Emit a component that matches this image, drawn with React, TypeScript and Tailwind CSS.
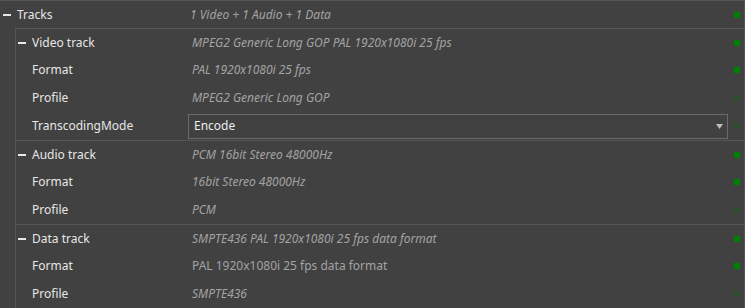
const font = { fontFamily: '"Noto Sans", "Open Sans", sans-serif' };

type Row = { label: string; value: string; italic?: boolean; on: boolean; combo?: boolean };

const groups: { title: string; value: string; rows: Row[] }[] = [
  {
    title: "Video track",
    value: "MPEG2 Generic Long GOP PAL 1920x1080i 25 fps",
    rows: [
      { label: "Format", value: "PAL 1920x1080i 25 fps", italic: true, on: true },
      { label: "Profile", value: "MPEG2 Generic Long GOP", italic: true, on: false },
      { label: "TranscodingMode", value: "Encode", on: false, combo: true },
    ],
  },
  {
    title: "Audio track",
    value: "PCM 16bit Stereo 48000Hz",
    rows: [
      { label: "Format", value: "16bit Stereo 48000Hz", italic: true, on: true },
      { label: "Profile", value: "PCM", italic: true, on: false },
    ],
  },
  {
    title: "Data track",
    value: "SMPTE436 PAL 1920x1080i 25 fps data format",
    rows: [
      { label: "Format", value: "PAL 1920x1080i 25 fps data format", on: true },
      { label: "Profile", value: "SMPTE436", italic: true, on: false },
    ],
  },
];

function Dot({ on }: { on: boolean }) {
  return (
    <span
      className={`w-[6px] h-[6px] shrink-0 mr-[4px] ${on ? "bg-[#008000]" : "bg-[#2f4f2f]"}`}
    />
  );
}

function Minus() {
  return <span className="w-[8px] h-[2px] bg-[#e6e6e6] shrink-0" />;
}

export default function App() {
  return (
    <div
      className="w-[745px] h-[308px] bg-[#414141] border-t border-r border-[#555555] overflow-hidden text-[12px]"
      style={font}
    >
      {/* Tracks */}
      <div className="flex items-center h-[27px]">
        <div className="w-[190px] flex items-center shrink-0 pl-[3px] gap-[6px]">
          <Minus />
          <span className="text-[#e6e6e6]">Tracks</span>
        </div>
        <span className="flex-1 italic text-[#a3a3a3]">1 Video + 1 Audio + 1 Data</span>
        <Dot on />
      </div>

      <div className="ml-[15px] border-l border-[#555555]">
        {groups.map((g) => (
          <div key={g.title} className="border-t border-[#555555]">
            <div className="flex items-center h-[27px]">
              <div className="w-[176px] flex items-center shrink-0 pl-[2px] gap-[6px]">
                <Minus />
                <span className="text-[#e6e6e6]">{g.title}</span>
              </div>
              <span className="flex-1 italic text-[#a3a3a3]">{g.value}</span>
              <Dot on />
            </div>
            {g.rows.map((r) => (
              <div key={r.label} className="flex items-center h-[28px]">
                <span className="w-[176px] shrink-0 pl-[16px] text-[#e6e6e6]">{r.label}</span>
                {r.combo ? (
                  <div className="flex-1 flex items-center -ml-[4px] mr-[6px] h-[25px] border border-[#6a6a6a] pl-[5px] pr-[4px]">
                    <span className="flex-1 text-[#ececec]">{r.value}</span>
                    <svg width="7" height="5" viewBox="0 0 7 5">
                      <path d="M0 0H7L3.5 5Z" fill="#bdbdbd" />
                    </svg>
                  </div>
                ) : (
                  <span className={`flex-1 text-[#a3a3a3] ${r.italic ? "italic" : ""}`}>{r.value}</span>
                )}
                <Dot on={r.on} />
              </div>
            ))}
          </div>
        ))}
      </div>
    </div>
  );
}
